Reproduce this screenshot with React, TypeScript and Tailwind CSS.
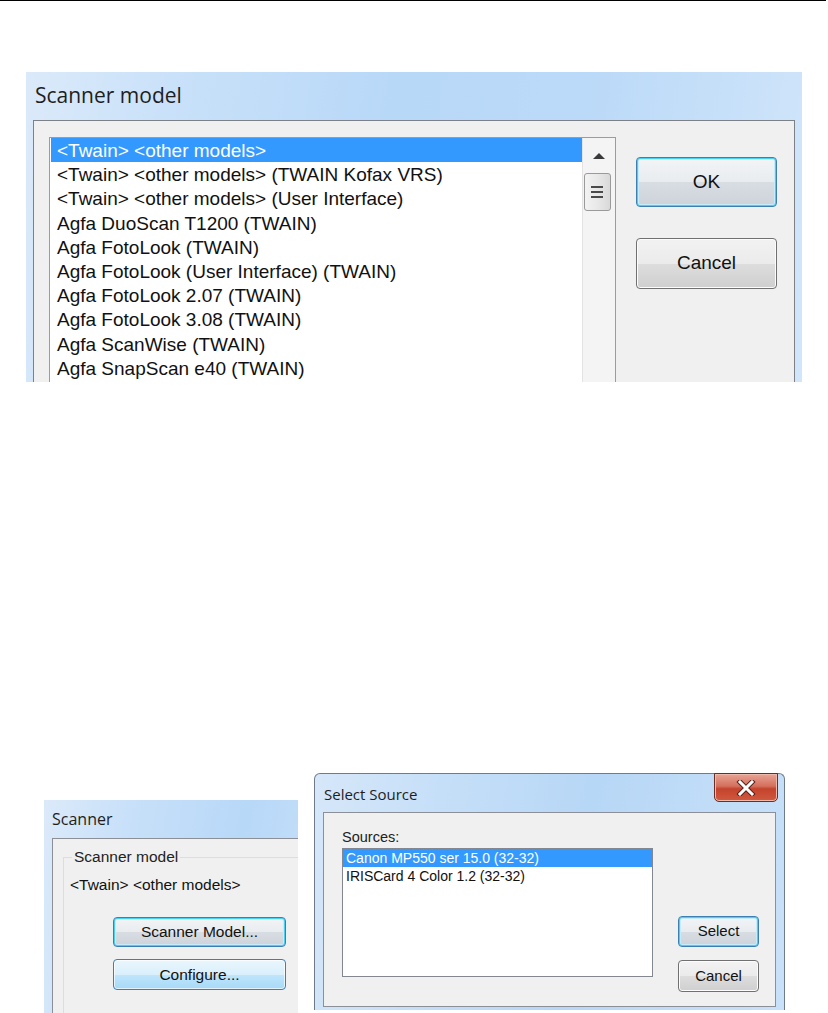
import React from "react";

const models=[
"<Twain> <other models>",
"<Twain> <other models> (TWAIN Kofax VRS)",
"<Twain> <other models> (User Interface)",
"Agfa DuoScan T1200 (TWAIN)",
"Agfa FotoLook (TWAIN)",
"Agfa FotoLook (User Interface) (TWAIN)",
"Agfa FotoLook 2.07 (TWAIN)",
"Agfa FotoLook 3.08 (TWAIN)",
"Agfa ScanWise (TWAIN)",
"Agfa SnapScan e40 (TWAIN)"
];

const sources=[
"Canon MP550 ser 15.0 (32-32)",
"IRISCard 4 Color 1.2 (32-32)"
];

const title="font-['Open_Sans','Noto_Sans',sans-serif] text-[#1e1e1e]";
const ui="font-['Liberation_Sans',Arial,sans-serif] text-[#111]";

// win7 push button; kind picks default / hover look
function WinButton({label,kind,className}:{label:string;kind?:"default"|"hover"|"plain";className:string}){

const skin=
kind==="default"
? "border-[#3c7fb1] shadow-[inset_0_0_0_1px_#48d1f5,inset_0_0_0_2px_#c4ecfc] bg-[linear-gradient(#f2f4f6_0%,#e9ecef_50%,#d7dde3_51%,#cdd3d9_100%)]"
: kind==="hover"
? "border-[#3c7fb1] shadow-[inset_0_0_0_1px_#ffffffaa] bg-[linear-gradient(#eaf6fd_0%,#d9f0fc_50%,#bee6fd_51%,#a7d9f5_100%)]"
: "border-[#707070] shadow-[inset_0_0_0_1px_#fcfcfc] bg-[linear-gradient(#f2f2f2_0%,#ebebeb_50%,#dddddd_51%,#cfcfcf_100%)]";

return(
<div className={`flex items-center justify-center rounded-[4px] border ${skin} ${className}`}>
{label}
</div>
);

}

function ScrollBar(){

return(
<div className="flex w-[33px] shrink-0 flex-col items-center border-l border-[#e3e3e3] bg-[#f4f4f4]">

<svg width="14" height="8" viewBox="0 0 14 8" className="mt-[14px]">
<path d="M1 7 L7 1 L13 7 Z" fill="#3a3a3a"/>
</svg>

<div className="mt-[13px] ml-[-4px] flex h-[38px] w-[27px] flex-col items-center justify-center gap-[3px] rounded-[3px] border border-[#9a9a9a] bg-[linear-gradient(to_right,#f3f3f3,#e8e8e8_50%,#d9d9d9)]">
<div className="h-[2px] w-[12px] bg-[#4a4a4a]"/>
<div className="h-[2px] w-[12px] bg-[#4a4a4a]"/>
<div className="h-[2px] w-[12px] bg-[#4a4a4a]"/>
</div>

</div>
);

}

function ScannerModelDialog(){

return(
<div className="ml-[26px] mt-[71px] flex h-[310px] w-[776px] flex-col overflow-hidden bg-[linear-gradient(100deg,#dbeafa_0%,#c9e1f9_18%,#b8d8f8_45%,#bcdaf8_70%,#d2e6fa_100%)]">

<div className={`${title} flex h-[48px] shrink-0 items-center pl-[9px] text-[21px]`}>
Scanner model
</div>

<div className="mx-[7px] flex flex-1 border border-b-0 border-[#7c8087] bg-[#f0f0f0] pl-[15px] pt-[16px]">

<div className="flex w-[567px] border border-b-0 border-[#9c9c9c] bg-white">

<div className={`${ui} flex-1 pl-[1px] text-[19px]`}>
{models.map((m,i)=>(
<div
key={m}
className={`h-[24.2px] whitespace-nowrap pl-[6px] pt-[1px] leading-[24px] ${i===0?"bg-[#3399ff] text-white":""}`}
>
{m}
</div>
))}
</div>

<ScrollBar/>

</div>

<div className={`${ui} ml-[20px] flex flex-col pt-[20px] text-[19px]`}>
<WinButton label="OK" kind="default" className="h-[50px] w-[141px]"/>
<WinButton label="Cancel" className="mt-[31px] h-[51px] w-[141px]"/>
</div>

</div>

</div>
);

}

function ScannerPanel(){

return(
<div className="mt-[27px] ml-[44px] flex h-[213px] w-[254px] shrink-0 flex-col overflow-hidden bg-[linear-gradient(100deg,#dbeafa_0%,#c8e0f9_30%,#b8d8f8_70%,#c4def9_100%)]">

<div className={`${title} flex h-[38px] shrink-0 items-center pl-[8px] text-[16px]`}>
Scanner
</div>

<div className="ml-[8px] flex-1 border border-r-0 border-b-0 border-[#8c9096] bg-[#f0f0f0] pl-[10px] pt-[18px]">

<div className={`${ui} relative h-[160px] border border-r-0 border-[#d5dfe5] text-[15.5px]`}>

<div className="absolute left-[8px] top-[-11px] bg-[#f0f0f0] px-[2px] leading-[20px] text-[#222]">
Scanner model
</div>

<div className="pl-[6px] pt-[17px] leading-[20px]">
{"<Twain> <other models>"}
</div>

<WinButton label="Scanner Model..." kind="default" className="ml-[49px] mt-[22px] h-[30px] w-[173px]"/>
<WinButton label="Configure..." kind="hover" className="ml-[49px] mt-[12px] h-[31px] w-[173px]"/>

</div>

</div>

</div>
);

}

function SelectSourceDialog(){

return(
<div className="ml-[16px] flex h-[237px] w-[471px] shrink-0 flex-col rounded-t-[6px] border border-b-0 border-[#6f7b88] bg-[linear-gradient(100deg,#d6e7f9_0%,#c6dff8_25%,#b7d7f6_55%,#c9e1f9_100%)]">

<div className="flex h-[38px] shrink-0 items-start justify-between">

<div className={`${title} pl-[9px] pt-[9px] text-[15px]`}>
Select Source
</div>

<div className="mr-[6px] mt-[-1px] flex h-[29px] w-[64px] items-center justify-center rounded-b-[5px] border border-[#6b2d24] bg-[linear-gradient(#e8a495_0%,#d4705d_45%,#c4432c_55%,#cf5a3f_100%)] shadow-[inset_0_0_0_1px_#f0b8a8]">
<svg width="20" height="16" viewBox="0 0 20 16">
<path d="M4 2 L16 14 M16 2 L4 14" stroke="#5a2019" strokeWidth="5" strokeLinecap="square"/>
<path d="M4 2 L16 14 M16 2 L4 14" stroke="#ffffff" strokeWidth="3" strokeLinecap="square"/>
</svg>
</div>

</div>

<div className="mx-[8px] mb-[3px] flex flex-1 border border-[#8c9096] bg-[#f0f0f0]">

<div className="flex flex-col pl-[18px] pt-[15px]">

<div className={`${ui} text-[14.5px] leading-[18px] text-[#222]`}>
Sources:
</div>

<div className={`${ui} mt-[2px] h-[129px] w-[311px] border border-[#828790] bg-white text-[14px]`}>
{sources.map((s,i)=>(
<div
key={s}
className={`h-[18px] pl-[3px] leading-[18px] ${i===0?"bg-[#3399ff] text-white":""}`}
>
{s}
</div>
))}
</div>

</div>

<div className={`${ui} ml-[25px] flex flex-col pt-[103px] text-[15px]`}>
<WinButton label="Select" kind="default" className="h-[31px] w-[81px]"/>
<WinButton label="Cancel" className="mt-[13px] h-[32px] w-[81px]"/>
</div>

</div>

</div>
);

}

export default function App(){

return(

<div className="relative h-[1013px] w-[828px] overflow-hidden bg-white">

<div className="h-px w-[826px] bg-black"/>

<ScannerModelDialog/>

<div className="mt-[391px] flex items-start">

<ScannerPanel/>

<SelectSourceDialog/>

</div>

</div>

);

}
